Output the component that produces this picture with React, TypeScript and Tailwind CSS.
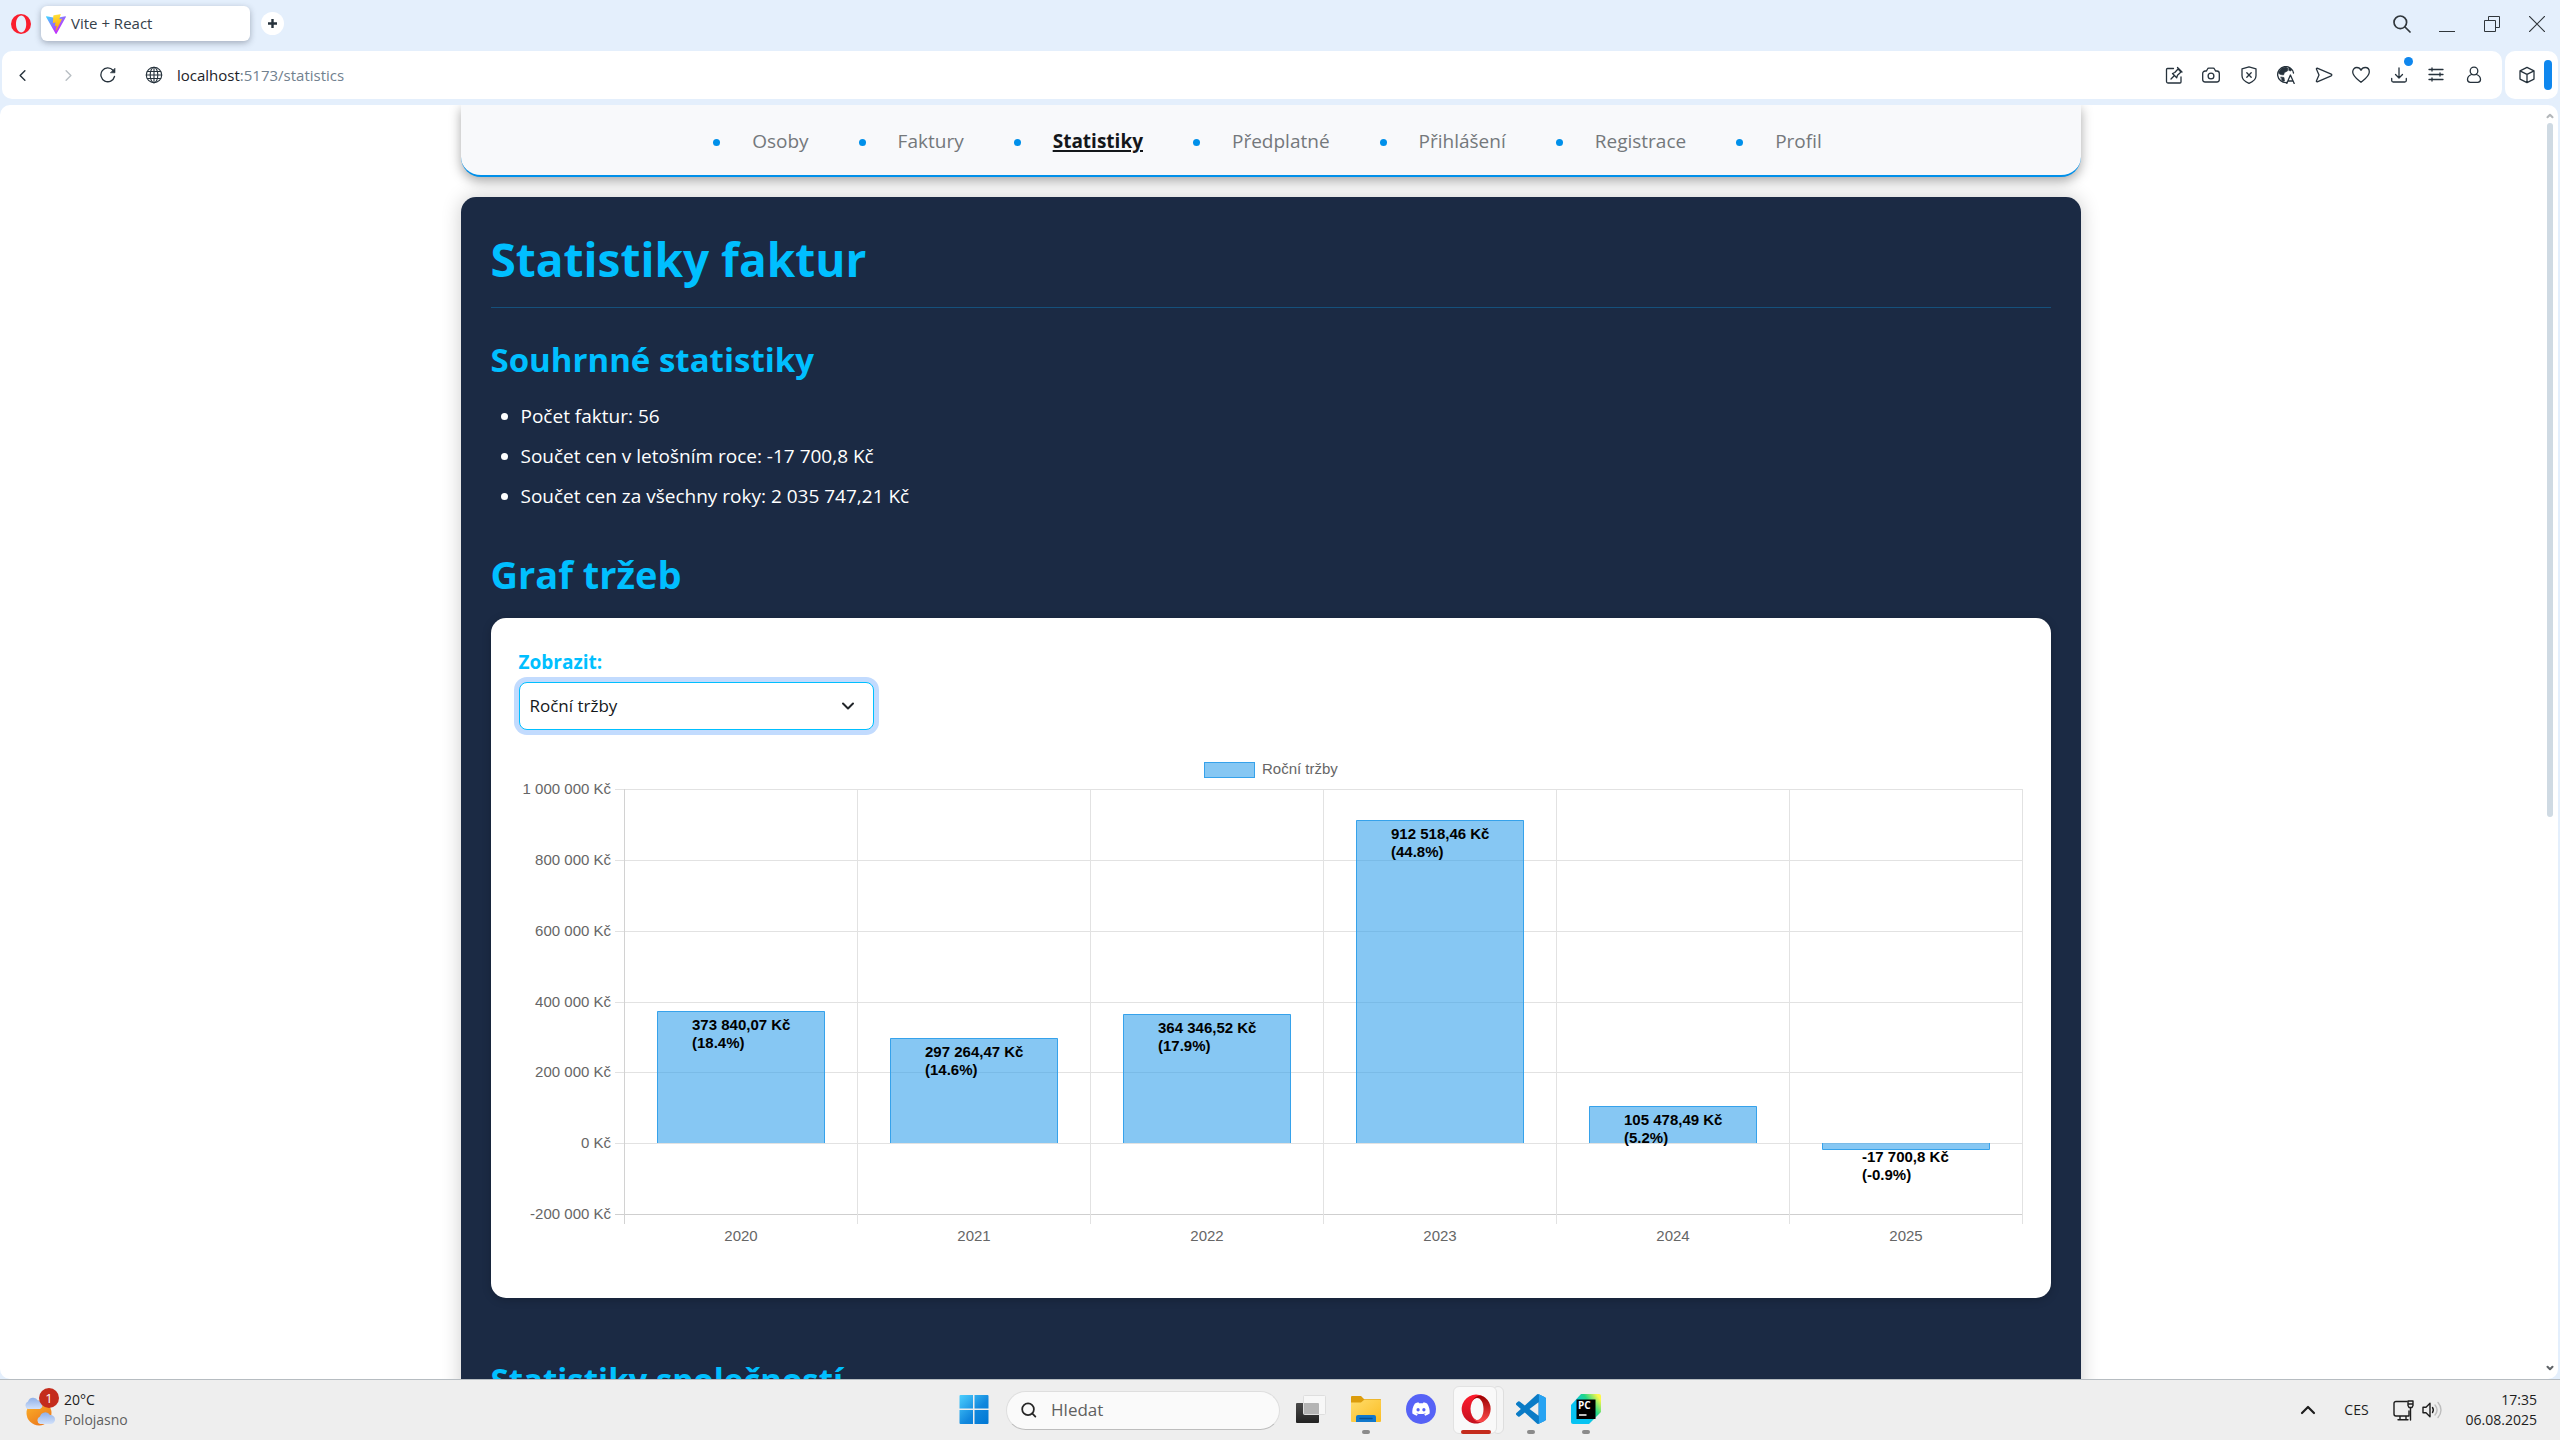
import React from "react";
import { ChevronDown, ChevronLeft, ChevronRight, ChevronUp, Search } from "lucide-react";
import { FaDiscord } from "react-icons/fa";

const line = {
  fill: "none",
  stroke: "currentColor",
  strokeWidth: 1.4,
  strokeLinecap: "round" as const,
  strokeLinejoin: "round" as const,
};

function OperaLogo() {
  return (
    <svg viewBox="0 0 20 20" className="size-5" aria-hidden="true">
      <path
        fillRule="evenodd"
        fill="#fa1e2e"
        d="M10 0a10 10 0 1 0 0 20a10 10 0 1 0 0-20zM10.300 1.500c2.900 0 4.900 3.600 4.900 8.500s-2 8.500-4.900 8.500s-5.300-3.600-5.300-8.500s2.400-8.500 5.300-8.500z"
      />
    </svg>
  );
}

function ViteLogo() {
  return (
    <svg viewBox="0 0 256 257" className="size-5" aria-hidden="true">
      <defs>
        <linearGradient id="vite-a" x1="0" x2="0.58" y1="0.08" y2="0.78">
          <stop offset="0" stopColor="#41d1ff" />
          <stop offset="1" stopColor="#bd34fe" />
        </linearGradient>
        <linearGradient id="vite-b" x1="0.43" x2="0.5" y1="0.02" y2="0.89">
          <stop offset="0" stopColor="#ffea83" />
          <stop offset="0.08" stopColor="#ffdd35" />
          <stop offset="1" stopColor="#ffa800" />
        </linearGradient>
      </defs>
      <path
        fill="url(#vite-a)"
        d="M255.153 37.938L134.897 252.976c-2.483 4.44-8.862 4.466-11.382.048L.875 37.958c-2.746-4.814 1.371-10.646 6.827-9.67l120.385 21.517a6.537 6.537 0 0 0 2.322-.004l117.867-21.483c5.438-.991 9.574 4.796 6.877 9.62Z"
      />
      <path
        fill="url(#vite-b)"
        d="M185.432.063L96.44 17.501a3.268 3.268 0 0 0-2.634 3.014l-5.474 92.456a3.268 3.268 0 0 0 3.997 3.378l24.777-5.718c2.318-.535 4.413 1.507 3.936 3.838l-7.361 36.047c-.495 2.426 1.782 4.5 4.151 3.78l15.304-4.649c2.372-.72 4.652 1.36 4.15 3.788l-11.698 56.621c-.732 3.542 3.979 5.473 5.943 2.437l1.313-2.028l72.516-144.72c1.215-2.423-.88-5.186-3.54-4.672l-25.505 4.922c-2.396.462-4.435-1.77-3.759-4.114l16.646-57.705c.677-2.35-1.37-4.583-3.769-4.113Z"
      />
    </svg>
  );
}

function TabStrip() {
  return (
    <div className="flex h-[51px] shrink-0 items-start justify-between">
      <div className="flex items-start">
        <button aria-label="Opera" className="mt-3.5 ml-[11px] flex">
          <OperaLogo />
        </button>
        <button className="mt-1.5 ml-2.5 flex h-[35px] w-[209px] items-center gap-[5px] rounded-md bg-white pl-[5px] text-left text-[15px] text-[#35404a] shadow-[0_2px_6px_rgba(60,70,90,0.4)]">
          <ViteLogo />
          <span>Vite + React</span>
        </button>
        <button aria-label="Nová karta" className="mt-3 ml-[11px] flex size-[23px] items-center justify-center rounded-full bg-white text-[#26323c]">
          <svg viewBox="0 0 11 11" className="size-[11px]">
            <path d="M5.500 1v9M1 5.500h9" stroke="currentColor" strokeWidth="2.400" />
          </svg>
        </button>
      </div>
      <div className="mr-px flex h-12 items-center text-[#30363b]">
        <button aria-label="Hledat karty" className="flex w-[45px] justify-center">
          <svg viewBox="0 0 18 18" className="size-[18px]" {...line} strokeWidth={1.700}>
            <circle cx="7.300" cy="7.300" r="6.300" />
            <path d="M12 12l5 5" />
          </svg>
        </button>
        <button aria-label="Minimalizovat" className="flex w-[45px] justify-center">
          <svg viewBox="0 0 16 16" className="size-4">
            <path d="M0 15.500h16" stroke="currentColor" />
          </svg>
        </button>
        <button aria-label="Obnovit" className="flex w-[45px] justify-center">
          <svg viewBox="0 0 16 16" className="size-4" fill="none" stroke="currentColor">
            <path d="M.5 4.500h11v11H.5zM4.500 4.500v-4h11v11h-4" />
          </svg>
        </button>
        <button aria-label="Zavřít" className="flex w-[45px] justify-center">
          <svg viewBox="0 0 16 16" className="size-4" fill="none" stroke="currentColor">
            <path d="M0 0l16 16M16 0L0 16" strokeWidth="1.200" />
          </svg>
        </button>
      </div>
    </div>
  );
}

const tools: { label: string; icon: React.ReactNode }[] = [
  {
    label: "Připnout",
    icon: <path d="M8.500 2.500h-6a1 1 0 0 0-1 1v12a1.500 1.500 0 0 0 1.500 1.500h12a1 1 0 0 0 1-1v-5M6 13l3.200-3.200M7.500 7.500l4.200 4.200.8-2.500 3.500-3.200-3-3-3.200 3.500zM12.500 1.500l4.500 4.500" />,
  },
  {
    label: "Snímek",
    icon: (
      <>
        <path d="M.7 7.500a2.500 2.500 0 0 1 2.500-2.500h1.300l1-2a1.500 1.500 0 0 1 1.300-.9h4.400a1.500 1.500 0 0 1 1.300.9l1 2h1.300a2.500 2.500 0 0 1 2.500 2.500v6a2.500 2.500 0 0 1-2.500 2.500H3.200a2.500 2.500 0 0 1-2.500-2.500z" />
        <circle cx="9" cy="10" r="2.900" />
      </>
    ),
  },
  {
    label: "Blokování reklam",
    icon: <path d="M9 .8l7 2v7c0 3.500-3 6-7 7.500c-4-1.500-7-4-7-7.500v-7zM6.800 6.800l4.400 4.400M11.200 6.800l-4.400 4.400" />,
  },
  {
    label: "Překlad",
    icon: (
      <>
        <path d="M9.500 16.500a8 8 0 1 1 7-9.500" />
        <path d="M2 5.500l3-3.700 4-.9 2 1.500-.5 2.500-3 1.600-1 2.500-3-.5-1.500-1zM4 11l3 .5.500 3.500-2 .5zM12 1.500l2.500 1.500-.5 2-2-.5z" fill="currentColor" strokeWidth="0.600" />
        <path d="M9.800 17.500l3.600-8.500 3.800 8.500M11 15h5" />
      </>
    ),
  },
  {
    label: "Poslat",
    icon: <path d="M2.200 2.200l14 5.900c.8.400.8 1.400 0 1.800l-14 5.900c-.5.200-1-.4-.8-.9L4 9 1.400 3.100c-.2-.5.3-1.100.8-.9z" />,
  },
  {
    label: "Záložky",
    icon: <path d="M9 16.300C5 13 .7 10 .7 5.900C.7 3.200 2.600 1.500 4.800 1.500C6.700 1.500 8.200 2.500 9 4.300c.8-1.800 2.300-2.800 4.200-2.800c2.200 0 4.100 1.700 4.100 4.400C17.300 10 13 13 9 16.300z" />,
  },
  {
    label: "Stahování",
    icon: <path d="M9 2v9.500M5.500 8.500L9 12l3.500-3.500M1.700 12.500v2a1.500 1.500 0 0 0 1.500 1.500h11.600a1.500 1.500 0 0 0 1.500-1.500v-2" />,
  },
  {
    label: "Snadné nastavení",
    icon: <path d="M2 3.500h14M2 8.500h14M2 13.500h14M5 2v3M13 7v3M5 12v3" />,
  },
  {
    label: "Profil prohlížeče",
    icon: (
      <>
        <circle cx="9" cy="5" r="3.800" />
        <path d="M6.500 8.500c-2.500 1-4 2.500-4 5c0 1.800 1 2.800 2.800 2.800h7.400c1.800 0 2.800-1 2.800-2.800c0-2.500-1.500-4-4-5" />
      </>
    ),
  },
];

function AddressBar() {
  return (
    <div className="flex h-12 shrink-0 gap-[3px] px-0.5 text-[#26323c]">
      <div className="flex min-w-0 flex-1 items-center rounded-[10px] bg-white pr-2.5">
        <button aria-label="Zpět" className="flex w-10 justify-center">
          <ChevronLeft className="size-[19px]" strokeWidth={1.8} />
        </button>
        <button aria-label="Vpřed" disabled className="ml-1.5 flex w-10 justify-center text-[#b9bfc4]">
          <ChevronRight className="size-[19px]" strokeWidth={1.8} />
        </button>
        <button aria-label="Načíst znovu" className="flex w-10 justify-center">
          <svg viewBox="0 0 16 16" className="size-4" {...line} strokeWidth={1.300}>
            <path d="M14.500 9.500A6.900 6.900 0 1 1 13 3.300" />
            <path d="M15 1.500v4.300h-4.300z" fill="currentColor" strokeWidth="0.600" />
          </svg>
        </button>
        <button aria-label="Informace o webu" className="ml-2 flex w-9 justify-center">
          <svg viewBox="0 0 18 18" className="size-[18px]" {...line} strokeWidth={1.100}>
            <circle cx="9" cy="9" r="7.700" />
            <ellipse cx="9" cy="9" rx="3.800" ry="7.700" />
            <path d="M9 1.300v15.400M2.300 5.500h13.400M2.300 12.500h13.400M1.300 9h15.400" />
          </svg>
        </button>
        <div
          role="textbox"
          aria-label="Adresa"
          contentEditable
          suppressContentEditableWarning
          className="ml-[5px] min-w-0 flex-1 text-[15px] text-[#71818f] outline-none"
        >
          <span className="text-[#1c2329]">localhost</span>:5173/statistics
        </div>
        <div className="flex">
          {tools.map((t) => (
            <button key={t.label} aria-label={t.label} className="relative flex h-9 w-[37px] items-center justify-center nth-[2n]:w-[38px]">
              <svg viewBox="0 0 18 18" className="size-[18px]" {...line} strokeWidth={1.300}>
                {t.icon}
              </svg>
              {t.label === "Stahování" && <span className="absolute top-0 right-1 size-[9px] rounded-full bg-[#0f87ee]" />}
            </button>
          ))}
        </div>
      </div>
      <div className="flex w-[53px] items-center justify-between rounded-[10px] bg-white pr-1.5 pl-[13px]">
        <button aria-label="Rozšíření" className="flex">
          <svg viewBox="0 0 18 18" className="size-[18px]" {...line} strokeWidth={1.300}>
            <path d="M9 1.300l7 3.600v8.200l-7 3.600-7-3.600V4.900zM2 4.900l7 3.500 7-3.500M9 8.400v8.300" />
          </svg>
        </button>
        <span className="h-[30px] w-2 rounded-full bg-[#0f87ee]" />
      </div>
    </div>
  );
}

const navItems = ["Osoby", "Faktury", "Statistiky", "Předplatné", "Přihlášení", "Registrace", "Profil"];

function SiteNav() {
  return (
    <nav className="rounded-b-[20px] border-b-2 border-[#0090ea] bg-[#f8f9fb] shadow-[0_4px_12px_rgba(0,0,0,0.35)]">
      <ul className="flex h-[70px] items-center justify-center gap-[50px] pt-0.5 pr-1.5 text-[19px]">
        {navItems.map((item) => (
          <li key={item} className="flex items-center gap-8">
            <span className="mt-0.5 size-[7px] rounded-full bg-[#0090ea]" />
            <a
              href="#"
              className={item === "Statistiky" ? "font-bold text-[#14171a] underline decoration-2 underline-offset-2" : "text-[#74787b]"}
            >
              {item}
            </a>
          </li>
        ))}
      </ul>
    </nav>
  );
}

const revenue = [
  { year: "2020", value: 373840.07, label: "373 840,07 Kč", share: "(18.4%)" },
  { year: "2021", value: 297264.47, label: "297 264,47 Kč", share: "(14.6%)" },
  { year: "2022", value: 364346.52, label: "364 346,52 Kč", share: "(17.9%)" },
  { year: "2023", value: 912518.46, label: "912 518,46 Kč", share: "(44.8%)" },
  { year: "2024", value: 105478.49, label: "105 478,49 Kč", share: "(5.2%)" },
  { year: "2025", value: -17700.8, label: "-17 700,8 Kč", share: "(-0.9%)" },
];

const ticks = [
  { value: 1000000, label: "1 000 000 Kč" },
  { value: 800000, label: "800 000 Kč" },
  { value: 600000, label: "600 000 Kč" },
  { value: 400000, label: "400 000 Kč" },
  { value: 200000, label: "200 000 Kč" },
  { value: 0, label: "0 Kč" },
  { value: -200000, label: "-200 000 Kč" },
];

const LEFT = 105;
const STEP = 233;
const TOP = 39;
const PLOT = 425;
const yOf = (v: number) => Math.round(TOP + ((1000000 - v) / 1200000) * PLOT);

function RevenueChart() {
  const right = LEFT + STEP * 6;
  const bottom = TOP + PLOT;
  return (
    <svg
      viewBox="0 0 1504 520"
      role="img"
      aria-label="Roční tržby"
      className="mt-5 w-full font-['Liberation_Sans',Arial,sans-serif] text-[15px]"
    >
      <rect x="685.500" y="12.500" width="50" height="15" fill="#86c7f3" stroke="#36a2eb" />
      <text x="743" y="24" fill="#666">Roční tržby</text>
      {ticks.map((t) => (
        <g key={t.value}>
          <path d={`M${LEFT - 9} ${yOf(t.value) + 0.5}H${right}`} stroke={t.value === -200000 ? "#cfcfcf" : "#e2e2e2"} />
          <text x="92" y={yOf(t.value) + 5} textAnchor="end" fill="#666">
            {t.label}
          </text>
        </g>
      ))}
      {[0, 1, 2, 3, 4, 5, 6].map((i) => (
        <path key={i} d={`M${LEFT + STEP * i + 0.5} ${TOP}V${bottom + 10}`} stroke={i === 0 ? "#d2d2d2" : "#e2e2e2"} />
      ))}
      {revenue.map((r, i) => {
        const cx = LEFT + STEP * i + 117;
        const x = cx - 84 + 0.5;
        const zero = yOf(0);
        const y = yOf(r.value);
        const top = Math.min(y, zero);
        const textX = cx - (r.value < 0 ? 44 : 49);
        return (
          <g key={r.year}>
            <rect x={x} y={top} width="167" height={Math.abs(y - zero)} fill="#36a2eb" fillOpacity="0.6" />
            <path d={`M${x} ${zero}V${y + 0.5}H${x + 167}V${zero}`} fill="none" stroke="#36a2eb" />
            <text x={textX} y={top + 19} fontWeight="bold">
              {r.label}
            </text>
            <text x={textX} y={top + 37} fontWeight="bold">
              {r.share}
            </text>
            <text x={cx} y="491" textAnchor="middle" fill="#666">
              {r.year}
            </text>
          </g>
        );
      })}
    </svg>
  );
}

function Statistics() {
  return (
    <main className="mt-5 rounded-[15px] bg-[#1b2a44] px-[30px] pt-8 pb-10 text-white shadow-[0_0_20px_rgba(0,0,0,0.2)]">
      <h1 className="border-b border-[#15507c] pb-[18px] text-[46px] leading-[60px] font-bold text-[#00bfff]">Statistiky faktur</h1>
      <h2 className="mt-[30px] text-[33px] leading-[44px] font-bold text-[#00bfff]">Souhrnné statistiky</h2>
      <ul className="mt-3.5 list-disc pl-[30px] text-[19px] leading-10">
        <li>Počet faktur: 56</li>
        <li>Součet cen v letošním roce: -17 700,8 Kč</li>
        <li>Součet cen za všechny roky: 2 035 747,21 Kč</li>
      </ul>
      <h2 className="mt-9 text-[38px] leading-[44px] font-bold text-[#00bfff]">Graf tržeb</h2>
      <section className="mt-[22px] rounded-[15px] bg-white px-7 pt-[30px] pb-7 shadow-[0_2px_10px_rgba(0,0,0,0.2)]">
        <label htmlFor="chart-kind" className="block text-[19px] leading-7 font-bold text-[#00bfff]">
          Zobrazit:
        </label>
        <div className="relative mt-1.5 w-[355px] text-[#212529]">
          <select
            id="chart-kind"
            className="h-12 w-full appearance-none rounded-lg border border-[#00bfff] bg-white pl-2.5 text-[17px] text-[#14171a] shadow-[0_0_0_5px_#c2dbfe] outline-none"
          >
            <option>Roční tržby</option>
          </select>
          <ChevronDown className="pointer-events-none absolute top-3.5 right-4 size-5" strokeWidth={2.4} />
        </div>
        <RevenueChart />
      </section>
      <h2 className="mt-[60px] text-[33px] leading-[44px] font-bold text-[#00bfff]">Statistiky společností</h2>
    </main>
  );
}

function Scrollbar() {
  return (
    <div className="flex w-[17px] shrink-0 flex-col items-center py-1.5" aria-hidden="true">
      <ChevronUp className="size-2.5 text-[#b4b8bb]" strokeWidth={5} />
      <div className="mt-0.5 h-[55%] w-1.5 rounded-full bg-[#cfdae3]" />
      <ChevronDown className="mt-auto size-2.5 text-[#5f6468]" strokeWidth={5} />
    </div>
  );
}

function WeatherIcon() {
  return (
    <svg viewBox="0 0 34 36" className="h-9 w-[34px]" aria-hidden="true">
      <defs>
        <linearGradient id="sun" x1="0" x2="0.6" y1="0" y2="1">
          <stop offset="0" stopColor="#fdb72a" />
          <stop offset="1" stopColor="#ec7a1c" />
        </linearGradient>
        <linearGradient id="cloud" x1="0" x2="0" y1="0" y2="1">
          <stop offset="0" stopColor="#8fb0e8" />
          <stop offset="1" stopColor="#d2e1fa" />
        </linearGradient>
      </defs>
      <circle cx="15" cy="21" r="12.500" fill="url(#sun)" />
      <path d="M4 17a4 4 0 0 1 0-7.500a5.500 5.500 0 0 1 10-1a4.500 4.500 0 0 1 2 8.500z" fill="url(#cloud)" />
      <path d="M16 32a4 4 0 0 1 0-7.500a5.500 5.500 0 0 1 10-1.500a4.500 4.500 0 0 1 1 9z" fill="url(#cloud)" />
    </svg>
  );
}

function TaskIcon({ label, dot, children }: { label: string; dot?: boolean; children: React.ReactNode }) {
  return (
    <button aria-label={label} className="relative flex h-12 w-[55px] items-center justify-center">
      <svg viewBox="0 0 30 30" className="-mt-0.5 size-[30px]">
        {children}
      </svg>
      {dot && <span className="absolute bottom-0 h-1 w-2 rounded-full bg-[#8a8a8a]" />}
    </button>
  );
}

function Taskbar() {
  return (
    <footer className="grid h-[61px] shrink-0 grid-cols-[1fr_auto_1fr] items-center border-t border-[#b6bcc1] bg-[#eeeeee] text-sm text-[#1d1d1d]">
      <button className="ml-6 flex items-center justify-self-start text-left leading-5">
        <span className="relative">
          <WeatherIcon />
          <span className="absolute -top-1 left-[15px] flex size-5 items-center justify-center rounded-full bg-[#c42b1c] text-[13px] text-white">1</span>
        </span>
        <span className="ml-1.5">
          <span className="block">20°C</span>
          <span className="block text-[#5f5f5f]">Polojasno</span>
        </span>
      </button>

      <div className="flex items-center">
        <TaskIcon label="Start">
          <defs>
            <linearGradient id="win" x1="0" y1="0" x2="29" y2="29" gradientUnits="userSpaceOnUse">
              <stop offset="0" stopColor="#4fd2ff" />
              <stop offset="0.600" stopColor="#1187dd" />
              <stop offset="1" stopColor="#0078d4" />
            </linearGradient>
          </defs>
          <path
            fill="url(#win)"
            d="M1.500 1H14v13.500H.5V2a1 1 0 0 1 1-1zM15.500 1h13a1 1 0 0 1 1 1v12.500h-14zM.5 16H14v14H1.500a1 1 0 0 1-1-1zM15.500 16h14v13a1 1 0 0 1-1 1h-13z"
          />
        </TaskIcon>
        <label className="mx-1 flex h-[39px] w-[274px] items-center gap-3.5 rounded-full border border-[#dedede] border-b-[#bdbdbd] bg-[#fafafa] pl-[13px]">
          <Search className="size-5 text-[#262626]" strokeWidth={2.4} />
          <input aria-label="Hledat" placeholder="Hledat" className="w-full min-w-0 bg-transparent text-[17px] outline-none placeholder:text-[#5f5f5f]" />
        </label>
        <TaskIcon label="Zobrazení úloh">
          <defs>
            <linearGradient id="tv-dark" x1="0" y1="0" x2="0" y2="1">
              <stop offset="0" stopColor="#4a4a4a" />
              <stop offset="1" stopColor="#222" />
            </linearGradient>
          </defs>
          <rect x="0" y="9" width="23" height="20" rx="1" fill="url(#tv-dark)" />
          <rect x="7.500" y="1.500" width="22" height="19" rx="1" fill="#f7f7f7" stroke="#dedede" />
          <path d="M8 9h14a1 1 0 0 1 1 1v10H8z" fill="#b4b4b4" />
        </TaskIcon>
        <TaskIcon label="Průzkumník souborů" dot>
          <defs>
            <linearGradient id="folder" x1="0" y1="0" x2="1" y2="1">
              <stop offset="0" stopColor="#ffdc6b" />
              <stop offset="1" stopColor="#fbbd23" />
            </linearGradient>
          </defs>
          <path d="M0 3a1 1 0 0 1 1-1h9l3 3h16a1 1 0 0 1 1 1v5H0z" fill="#dc9c0c" />
          <path d="M0 8.500h10L13.500 5.500H29a1 1 0 0 1 1 1V27a1 1 0 0 1-1 1H1a1 1 0 0 1-1-1z" fill="url(#folder)" />
          <path d="M5 28v-5a2 2 0 0 1 2-2h16a2 2 0 0 1 2 2v5z" fill="#1178cc" />
          <path d="M9 24.500h12" stroke="#0b4f91" strokeWidth="1.500" strokeLinecap="round" />
        </TaskIcon>
        <TaskIcon label="Discord">
          <circle cx="15" cy="15" r="15" fill="#5662f6" />
          <FaDiscord x="5.500" y="5.500" size={19} color="#fff" />
        </TaskIcon>
        <div className="relative flex justify-center">
          <span className="absolute top-0 right-0 h-12 w-3 rounded-md border border-[#dedede] bg-[#f5f5f5]" />
          <span className="absolute top-0 left-1 h-12 w-11 rounded-md border border-[#e2e2e2] bg-[#f9f9f9]" />
          <TaskIcon label="Prohlížeč Opera">
            <defs>
              <linearGradient id="op-a" x1="0" y1="0" x2="0" y2="1">
                <stop offset="0" stopColor="#ff1b2d" />
                <stop offset="1" stopColor="#c4111f" />
              </linearGradient>
              <linearGradient id="op-b" x1="0" y1="0" x2="0" y2="1">
                <stop offset="0" stopColor="#9c0000" />
                <stop offset="1" stopColor="#ff4b4b" />
              </linearGradient>
            </defs>
            <path d="M15 .5a14.500 14.500 0 1 0 9 26c-2 1-10 1.500-13-5c-2-4.500-2-9 0-13.500c3-6 10-6 13-4.500A14.500 14.500 0 0 0 15 .5z" fill="url(#op-a)" />
            <path d="M11 8c1-2.500 3-3.900 5-3.900c4 0 6.500 5 6.500 10.900s-2.500 10.900-6.500 10.900c-2 0-4-1.400-5-3.900c2 6 8 8 13 4.500a14.500 14.500 0 0 0 0-23C19 0 13 2 11 8z" fill="url(#op-b)" />
          </TaskIcon>
          <span className="absolute bottom-0 h-1 w-[30px] rounded-full bg-[#c42b1c]" />
        </div>
        <TaskIcon label="Visual Studio Code" dot>
          <defs>
            <clipPath id="vs-right">
              <rect x="18" y="0" width="6" height="24" />
            </clipPath>
          </defs>
          <g transform="scale(1.250)">
            <path
              fill="#0a7bc6"
              d="M23.150 2.587L18.210.21a1.494 1.494 0 0 0-1.705.29l-9.460 8.630-4.120-3.128a.999.999 0 0 0-1.276.057L.327 7.261A1 1 0 0 0 .326 8.740L3.899 12 .326 15.260a1 1 0 0 0 .001 1.479L1.650 17.940a.999.999 0 0 0 1.276.057l4.120-3.128 9.460 8.630a1.492 1.492 0 0 0 1.704.29l4.942-2.377A1.500 1.500 0 0 0 24 20.060V3.939a1.500 1.500 0 0 0-.85-1.352zm-5.146 14.861L10.826 12l7.178-5.448v10.896z"
            />
            <path
              clipPath="url(#vs-right)"
              fill="#27a3f2"
              d="M23.150 2.587L18.210.21V23.790l4.942-2.377A1.500 1.500 0 0 0 24 20.060V3.939a1.500 1.500 0 0 0-.85-1.352z"
            />
          </g>
        </TaskIcon>
        <TaskIcon label="PyCharm" dot>
          <defs>
            <linearGradient id="pc" x1="0" y1="0.800" x2="1" y2="0.100">
              <stop offset="0.350" stopColor="#07c3f2" />
              <stop offset="0.650" stopColor="#21d789" />
              <stop offset="0.950" stopColor="#fcf84a" />
            </linearGradient>
          </defs>
          <path d="M10 0h18a2 2 0 0 1 2 2v16L18 30H2a2 2 0 0 1-2-2V11z" fill="url(#pc)" />
          <rect x="5.500" y="5.500" width="19" height="19.500" fill="#000" />
          <text x="7" y="15" fill="#fff" fontSize="10" fontWeight="bold">PC</text>
          <path d="M8 21h7.500" stroke="#fff" strokeWidth="1.500" />
        </TaskIcon>
      </div>

      <div className="mr-[23px] flex items-center justify-self-end">
        <button aria-label="Skryté ikony" className="flex">
          <ChevronUp className="size-6" strokeWidth={2.2} />
        </button>
        <button className="ml-6">CES</button>
        <button aria-label="Síť a zvuk" className="ml-6 flex items-center gap-2">
          <svg viewBox="0 0 21 21" className="size-[21px]" {...line}>
            <path d="M14 1.500H3a2 2 0 0 0-2 2V14a2 2 0 0 0 2 2h13V11M5 19.800h10M7 16v3.500M13 16v3.500" />
            <path d="M15 1h5v4.500l-1 2h-3l-1-2zM15 4h5M17.500 8v12" />
          </svg>
          <svg viewBox="0 0 20 18" className="h-[18px] w-5" {...line}>
            <path d="M1 6.200h3l4-4v13.600l-4-4H1z" />
            <path d="M10.500 6.500c1 1.500 1 3.500 0 5" />
            <path d="M13 4c2.500 3 2.500 7 0 10M16 1.500c4 4.500 4 10.500 0 15" stroke="#bdbdbd" />
          </svg>
        </button>
        <button className="ml-6 text-right leading-5">
          <span className="block">17:35</span>
          <span className="block">06.08.2025</span>
        </button>
      </div>
    </footer>
  );
}

export default function App() {
  return (
    <div className="flex h-screen flex-col overflow-hidden bg-[#e4effc] font-['Open_Sans','Noto_Sans',sans-serif]">
      <TabStrip />
      <AddressBar />
      <div className="mt-1.5 mr-0.5 flex min-h-0 flex-1 overflow-hidden rounded-[10px] bg-white">
        <div className="min-w-0 flex-1 overflow-hidden">
          <div className="mx-auto max-w-[1620px]">
            <SiteNav />
            <Statistics />
          </div>
        </div>
        <Scrollbar />
      </div>
      <Taskbar />
    </div>
  );
}
